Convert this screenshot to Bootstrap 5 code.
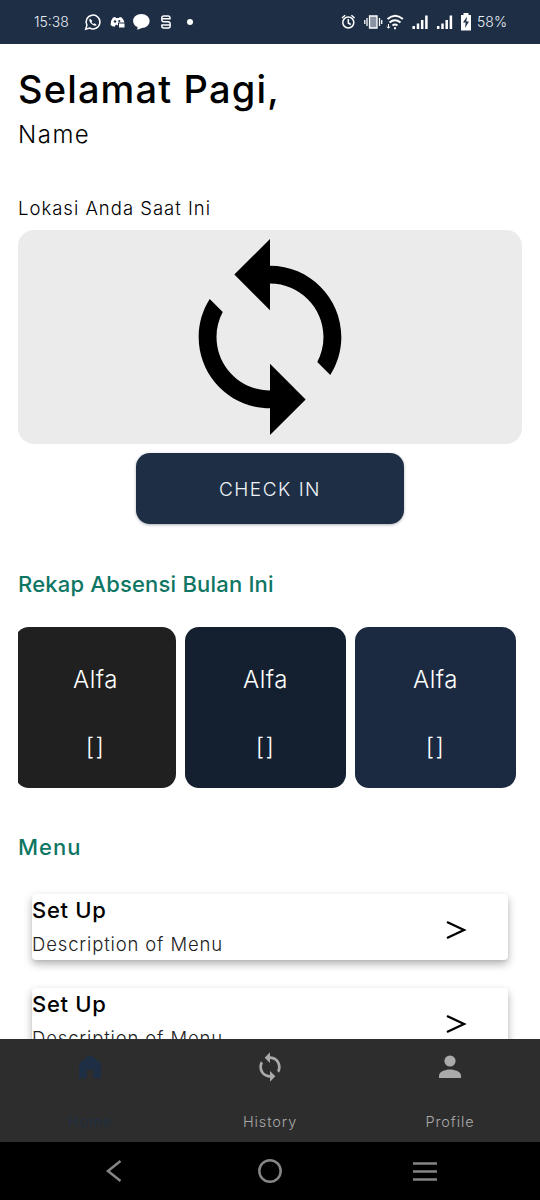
<!DOCTYPE html>
<html lang="id">
<head>
<meta charset="utf-8">
<meta name="viewport" content="width=device-width, initial-scale=1">
<title>Absensi</title>
<link href="https://cdn.jsdelivr.net/npm/bootstrap@5.3.0/dist/css/bootstrap.min.css" rel="stylesheet">
<style>
body{font-family:Inter,"Open Sans",sans-serif;font-weight:300;color:#000;background:#fff;line-height:1}
.phone{width:540px;height:1200px}
.status{height:44px;background:#1d2e45;color:#e9eef5;font-size:14px;padding:0 33px 0 34px}
.clock{width:46px;flex:none}
.content{padding:0 18px;min-height:0}
h1,h2,h3,p{margin:0;white-space:nowrap}
.greet{font-size:38px;font-weight:500;line-height:46px;margin-top:22px;letter-spacing:1.15px}
.who{font-size:24px;line-height:30px;margin-top:8px;letter-spacing:1.5px}
.where{font-size:18.500px;line-height:24px;margin-top:46px;letter-spacing:1px}
.locbox{height:214px;margin-top:10px;border-radius:16px;background:#ebebeb}
.checkin{width:268px;height:71px;margin-top:9px;padding-top:9px;border-radius:14px;background:#1d2e45;color:#f0f4f8;font-size:19px;font-weight:300;letter-spacing:1.5px;box-shadow:0 1px 3px #1d2e4560}
.checkin:hover{background:#263b57;color:#fff}
.sect{font-size:22px;font-weight:500;color:#0e7663;line-height:30px;letter-spacing:.2px}
.sect.menu-title{letter-spacing:1px}
.recap{height:161px;gap:9px;margin-top:28px;overflow:hidden}
.tile{width:161px;height:161px;border-radius:14px;color:#fff;font-size:24px;flex:none}
.tile.cut{margin-left:-3px}
.c1{background:#202020}.c2{background:#14202f}.c3{background:#1b2a41}
.tile span{line-height:30px;margin-top:38px;letter-spacing:.6px}
.tile span+span{margin-top:37px;letter-spacing:1.500px}
.item{height:66px;margin:0 14px 28px;border-radius:4px;box-shadow:0 4px 8px #0000004d,0 1px 2px #0000000d;background:#fff}
.item h3{font-size:22px;font-weight:500;line-height:28px;margin-top:2px;letter-spacing:.7px}
.item p{font-size:18.500px;line-height:24px;margin-top:8px;color:#222;letter-spacing:.85px}
.tabs{height:103px;background:#2d2d2d;color:#aaa;font-size:14.5px;letter-spacing:.9px}
.tabs a{color:inherit;text-decoration:none;width:180px;padding-top:12px}
.tabs a span{margin-top:29px;line-height:20px}
.tabs a.active{color:#1d2e45}
.keys{height:58px;background:#000}
svg{display:block;flex:none}
</style>
</head>
<body>
<div class="phone d-flex flex-column overflow-hidden">
  <header class="status d-flex align-items-center flex-shrink-0">
    <span class="clock">15:38</span>
    <svg width="115" height="20" viewBox="80 12 115 20" fill="none" stroke="#fff">
      <path d="M85.700 29.200l1.200-4A6.900 6.900 0 1 1 89.600 28z" stroke-width="1.500"/>
      <path d="M90 18.500c-1.400 1-.8 3.300 1.300 5.300s4.500 2.700 5.400 1.200l-2-1.700-1.200.8c-1-.5-1.600-1.200-2-2.200l.8-1z" fill="#fff" stroke="none"/>
      <path d="M113 17.500l2.300-.6.8 1.200h2.800l.8-1.200 2 .6q2.300 2.500 2.800 5H118v3l-2-1-1.400 2.200q-2.600-.2-4-1.800-.1-4.500 2.400-7.400z" fill="#fff" stroke="none"/><path d="M119 23.500h5.500v4H119z" fill="#fff" stroke="none"/><circle cx="115" cy="21.500" r="1.200" fill="#1d2e45" stroke="none"/><circle cx="119.300" cy="21" r="1.100" fill="#1d2e45" stroke="none"/>
      <path d="M141.300 13.900c4.700 0 8.300 3 8.300 7s-3.600 7-7.600 7l-4.800 1.800.4-2.600c-2.700-1.100-4.500-3.300-4.500-6.200 0-4 3.600-7 8.200-7z" fill="#fff" stroke="none"/>
      <path d="M170 19.500v-1.500q0-2-2-2h-4.200q-2 0-2 2v1.500q0 2.200 2 2.200h4.200q2.200 0 2.200 2.200V26q0 2-2 2h-4.400q-2 0-2-2v-1.500M161.800 18.800h8.400M161.800 25h8.400" stroke-width="1.400"/>
      <circle cx="190" cy="22" r="3" fill="#fff" stroke="none"/>
    </svg>
    <svg class="ms-auto me-1" width="134" height="20" viewBox="339 12 134 20" fill="none" stroke="#fff">
      <circle cx="348.300" cy="22.500" r="5.500" stroke-width="1.500"/><path d="M348.300 19v4l2.500 1.500M342 18l3.200-2.700M354.600 18l-3.200-2.700" stroke-width="1.500"/>
      <path d="M369.500 16h7.500v12h-7.500z" fill="#8993a3" stroke-width="1.300"/><path d="M367 18v8M364.800 20v4M379.500 18v8M381.700 20v4" stroke-width="1.300"/>
      <path d="M387.500 19q7.700-6.500 15.400 0M389.500 22.500q5.500-4.500 11 0M392.500 25.500q2.500-2 5 0" stroke-width="1.900"/><path d="M394 27.200h2v2h-2z" fill="#fff" stroke="none"/><path d="M388.500 24v4M387 26.500l1.500 1.800 1.500-1.800" stroke-width="1"/>
      <path d="M413.700 26v3M418 23.500V29M422.200 20v9M426.400 15.500V29M438.200 26v3M442.500 23.500V29M446.700 20v9M450.900 15.500V29" stroke-width="2.500"/>
      <path d="M461 15h2.500v-2h5v2h2.500v15.500h-10z" fill="#fff" stroke="none"/><path d="M467 16.500l-4 6h2.700L465 28l4-6.500h-2.700z" fill="#1d2e45" stroke="none"/>
    </svg>
    <span>58%</span>
  </header>

  <main class="content flex-grow-1 overflow-hidden">
    <h1 class="greet">Selamat Pagi,</h1>
    <p class="who">Name</p>
    <p class="where">Lokasi Anda Saat Ini</p>
    <div class="locbox d-flex align-items-center justify-content-center">
      <svg width="214" height="214" viewBox="0 0 24 24"><path d="M12 4V1L8 5l4 4V6c3.310 0 6 2.690 6 6 0 1.010-.25 1.970-.7 2.800l1.460 1.460C19.540 15.030 20 13.570 20 12c0-4.420-3.580-8-8-8zm0 14c-3.310 0-6-2.690-6-6 0-1.010.25-1.970.7-2.800L5.240 7.740C4.460 8.970 4 10.430 4 12c0 4.420 3.580 8 8 8v3l4-4-4-4v3z"/></svg>
    </div>
    <button class="checkin btn d-block mx-auto border-0" type="button">CHECK IN</button>
    <h2 class="sect" style="margin-top:45px">Rekap Absensi Bulan Ini</h2>
    <div class="recap d-flex">
      <div class="tile cut c1 d-flex flex-column align-items-center"><span>Alfa</span><span>[]</span></div>
      <div class="tile c2 d-flex flex-column align-items-center"><span>Alfa</span><span>[]</span></div>
      <div class="tile c3 d-flex flex-column align-items-center"><span>Alfa</span><span>[]</span></div>
    </div>
    <h2 class="sect menu-title" style="margin-top:44px;margin-bottom:32px">Menu</h2>
    <div class="item d-flex justify-content-between">
      <div><h3>Set Up</h3><p>Description of Menu</p></div>
      <svg class="me-4" width="54" height="66" viewBox="0 0 54 66"><path d="M17 28l17 8-17 8" fill="none" stroke="#000" stroke-width="2.300"/></svg>
    </div>
    <div class="item d-flex justify-content-between">
      <div><h3>Set Up</h3><p>Description of Menu</p></div>
      <svg class="me-4" width="54" height="66" viewBox="0 0 54 66"><path d="M17 28l17 8-17 8" fill="none" stroke="#000" stroke-width="2.300"/></svg>
    </div>
  </main>

  <nav class="tabs d-flex flex-shrink-0">
    <a class="active d-flex flex-column align-items-center" href="#"><svg width="32" height="32" viewBox="0 0 24 24" fill="currentColor"><path d="M3.800 10.500Q4 9 5 8.300L10.500 3.800q1.500-1 3 0L19 8.300q1 .7 1.200 2.200v10h-5.700V14h-5v6.500H3.800z"/></svg><span>Home</span></a>
    <a class="d-flex flex-column align-items-center" href="#"><svg width="32" height="32" viewBox="0 0 24 24" fill="currentColor"><path d="M12 4V1L8 5l4 4V6c3.310 0 6 2.690 6 6 0 1.010-.25 1.970-.7 2.800l1.460 1.460C19.540 15.030 20 13.570 20 12c0-4.420-3.580-8-8-8zm0 14c-3.310 0-6-2.690-6-6 0-1.010.25-1.970.7-2.800L5.240 7.740C4.460 8.970 4 10.430 4 12c0 4.420 3.580 8 8 8v3l4-4-4-4v3z"/></svg><span>History</span></a>
    <a class="d-flex flex-column align-items-center" href="#"><svg width="32" height="32" viewBox="0 0 32 32" fill="currentColor"><circle cx="16" cy="10" r="5.600"/><path d="M5 27v-2.500c0-3.700 6-6 11-6s11 2.300 11 6V27z"/></svg><span>Profile</span></a>
  </nav>
  <div class="keys flex-shrink-0">
    <svg width="540" height="58" viewBox="0 0 540 58" fill="none" stroke="#858585" stroke-width="2.500"><path d="M120.500 19l-12.500 10 12.500 10"/><circle cx="270" cy="29" r="10.700"/><path d="M413 21.500h24M413 29.500h24M413 37.500h24"/></svg>
  </div>
</div>
<script src="https://cdn.jsdelivr.net/npm/bootstrap@5.3.0/dist/js/bootstrap.bundle.min.js"></script>
</body>
</html>
